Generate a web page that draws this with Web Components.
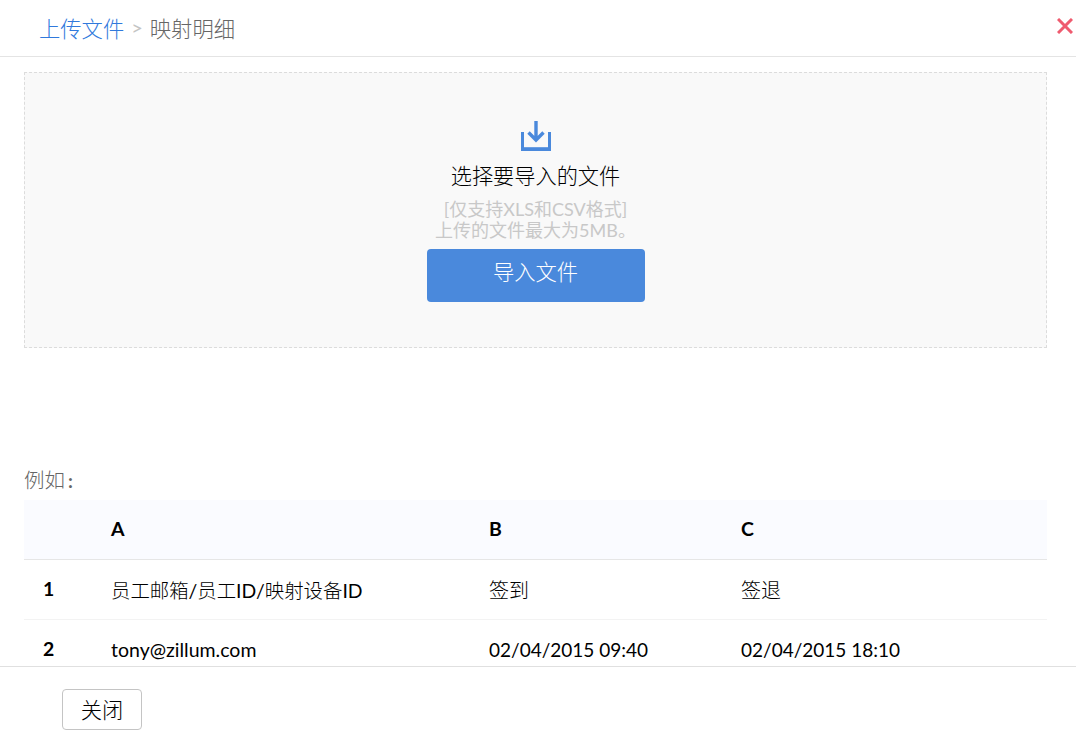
<!DOCTYPE html>
<html lang="zh">
<head>
<meta charset="utf-8">
<style>
  html, body { margin: 0; height: 100%; background: #fff; overflow: hidden; }
  body { font-family: Lato, "Noto Sans CJK SC", sans-serif; }
</style>
</head>
<body>
<import-dialog>
  <span slot="crumb">上传文件</span>
  <span slot="current">映射明细</span>
  <upload-zone title-text="选择要导入的文件" hint="[仅支持XLS和CSV格式]" limit="上传的文件最大为5MB。" action="导入文件"></upload-zone>
  <sample-table label="例如"></sample-table>
  <span slot="close">关闭</span>
</import-dialog>

<script>
// 对话框外框：头部、滚动内容、底部按钮
class ImportDialog extends HTMLElement {
  constructor() {
    super();
    this.attachShadow({ mode: 'open' });
    this.shadowRoot.innerHTML = `
      <style>
        :host { display: flex; flex-direction: column; height: 745px; color: #000; }
        header { flex: none; height: 56px; box-sizing: content-box; border-bottom: 1px solid #e4e4e4; display: flex; align-items: center; padding: 0 3px 0 39px; font-size: 21.3px; font-weight: 300; }
        .crumb, .current { margin-bottom: 2px; }
        .crumb { color: #3079dc; }
        .sep { color: #c4c4c4; margin: 0 7px 2px; font-size: 20px; font-weight: 400; }
        .current { color: #666; flex: 1; }
        header svg { display: block; margin-bottom: 4px; }
        main { flex: 1; min-height: 0; overflow: hidden; padding: 15px 29px 0 24px; }
        footer { flex: none; height: 79px; border-top: 1px solid #e0e0e0; padding: 22px 0 0 62px; box-sizing: border-box; }
        button { width: 80px; height: 41px; background: #fff; border: 1px solid #c4c4c4; border-radius: 4px; font: inherit; font-size: 21.3px; font-weight: 300; color: #000; padding: 0 0 2px; }
      </style>
      <header>
        <span class="crumb"><slot name="crumb"></slot></span>
        <span class="sep">&gt;</span>
        <span class="current"><slot name="current"></slot></span>
        <svg width="16" height="16" viewBox="0 0 16 16"><path d="M1 1 15 15M15 1 1 15" stroke="#ef5b6f" stroke-width="3" fill="none"/></svg>
      </header>
      <main><slot></slot></main>
      <footer><button><slot name="close"></slot></button></footer>
    `;
  }
}

// 上传区域
class UploadZone extends HTMLElement {
  constructor() {
    super();
    this.attachShadow({ mode: 'open' });
    this.shadowRoot.innerHTML = `
      <style>
        :host { display: block; height: 276px; box-sizing: border-box; background: #f9f9f9; border: 1px dashed #dcdcdc; }
        .wrap { display: flex; flex-direction: column; align-items: center; padding-top: 48px; }
        svg { display: block; }
        h3 { margin: 11px 0 0; font-size: 21.2px; font-weight: 300; line-height: 28px; color: #000; }
        p { margin: 9px 0 0; font-size: 18px; line-height: 21px; color: #c8c8c8; text-align: center; }
        button { margin-top: 8px; width: 218px; height: 53px; border: 0; border-radius: 4px; background: #4a89dc; color: #fff; font: inherit; font-size: 21.3px; font-weight: 300; padding: 0 0 10px; }
      </style>
      <div class="wrap">
        <svg width="30" height="30" viewBox="0 0 30 30" fill="none" stroke="#4a89dc" stroke-width="3">
          <path d="M1.5 11V28H28.5V11"/>
          <path d="M0 28.2H30" stroke-width="3.6"/>
          <path d="M15 0V19M7.5 11.5 15 19 22.5 11.5" stroke-width="3.4"/>
        </svg>
        <h3>${this.getAttribute('title-text')}</h3>
        <p>${this.getAttribute('hint')}<br>${this.getAttribute('limit')}</p>
        <button>${this.getAttribute('action')}</button>
      </div>
    `;
  }
}

// 示例表格
class SampleTable extends HTMLElement {
  constructor() {
    super();
    this.attachShadow({ mode: 'open' });
    const l = t => `<span class="l">${t}</span>`;
    const w = t => `<span class="l wide">${t}</span>`;
    const rows = [
      ['1', `${l('员工邮箱')}/${l('员工')}ID/${l('映射设备')}ID`, w('签到'), w('签退')],
      ['2', '<span class="mail">tony@zillum.com</span>', '<span class="date">02/04/2015 09:40</span>', '<span class="date">02/04/2015 18:10</span>']
    ];
    this.shadowRoot.innerHTML = `
      <style>
        :host { display: block; margin-top: 119px; }
        .label { font-size: 20.5px; line-height: 26px; color: #666; height: 33px; font-weight: 300; }
        .label b { font-weight: 700; margin-left: 3px; font-size: 19px; }
        .row { display: grid; grid-template-columns: 87px 378px 252px 1fr; height: 60px; align-items: center; box-sizing: border-box; font-size: 19.4px; color: #000; border-bottom: 1px solid #f3f3f3; padding-bottom: 2px; background: linear-gradient(#ebebeb, #ebebeb) left bottom / 75px 1px no-repeat border-box; }
        .row:not(.head) > span:not(.num) { padding-top: 2px; }
        .head { background: #fafbff; border-bottom: 1px solid #e6e6e6; font-weight: 700; font-size: 19.5px; }
        .num { font-weight: 700; padding-left: 19px; }
        .l { font-weight: 300; }
        .wide { font-size: 20px; }
        .mail { font-size: 19.5px; }
        .date { font-size: 19px; }
      </style>
      <div class="label">${this.getAttribute('label')}<b>:</b></div>
      <div class="row head"><span></span><span>A</span><span>B</span><span>C</span></div>
      ${rows.map(r => `
        <div class="row">
          <span class="num">${r[0]}</span><span>${r[1]}</span><span>${r[2]}</span><span>${r[3]}</span>
        </div>`).join('')}
    `;
  }
}

customElements.define('import-dialog', ImportDialog);
customElements.define('upload-zone', UploadZone);
customElements.define('sample-table', SampleTable);
</script>
</body>
</html>
